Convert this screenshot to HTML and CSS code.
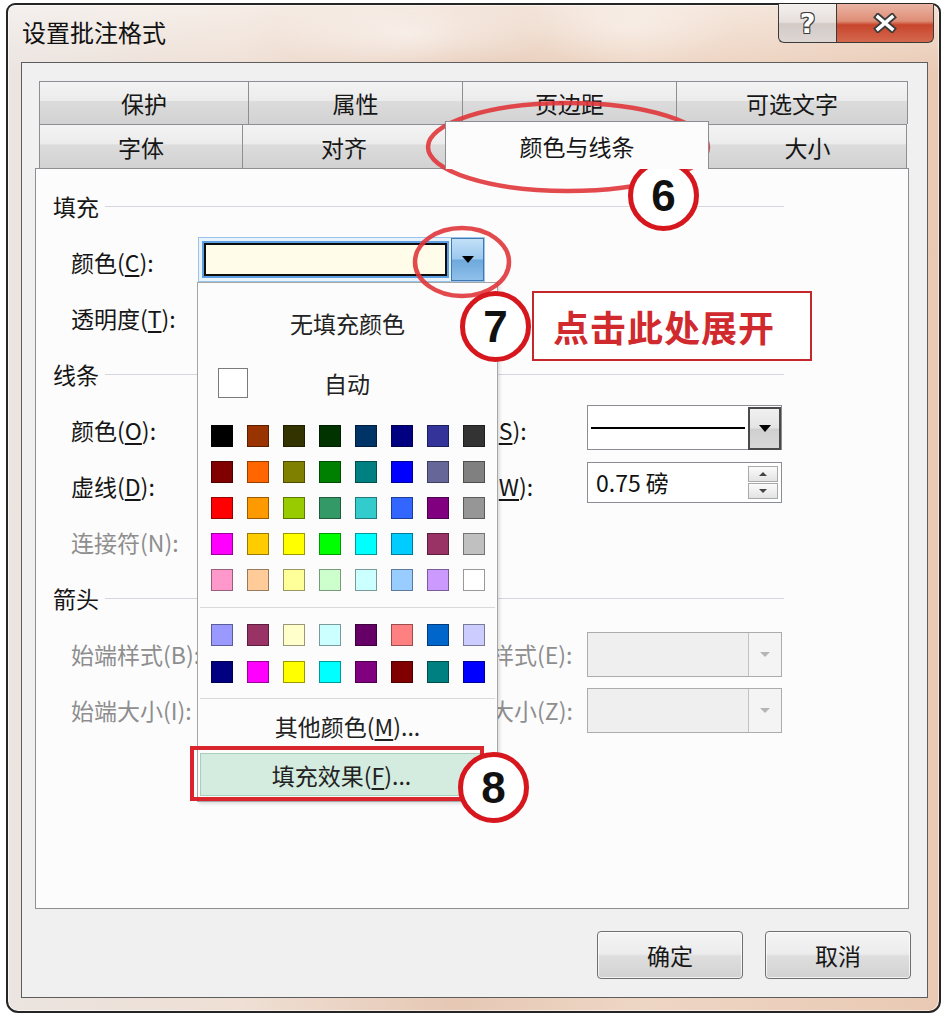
FILE: index.html
```html
<!DOCTYPE html>
<html lang="zh-CN">
<head>
  <meta charset="UTF-8" />
  <meta name="viewport" content="width=device-width, initial-scale=1.0" />
  <title>设置批注格式</title>
  <link rel="stylesheet" href="styles.css">
</head>
<body>
  <div class="window">
    <div class="titlebar">
      <span class="title">设置批注格式</span>
      <div class="caption-buttons">
        <div class="caption-btn help">?</div>
        <div class="caption-btn close">
          <svg width="24" height="20" viewBox="0 0 24 20">
            <path d="M5 4 L19 16 M19 4 L5 16" stroke="#3b3b3b" stroke-width="7" stroke-linecap="square" fill="none"/>
            <path d="M5 4 L19 16 M19 4 L5 16" stroke="#ffffff" stroke-width="3.5" stroke-linecap="square" fill="none"/>
          </svg>
        </div>
      </div>
    </div>

    <div class="client">
      <div class="tabs">
        <div class="tab-row">
          <div class="tab tab-protect">保护</div>
          <div class="tab tab-props">属性</div>
          <div class="tab tab-margins">页边距</div>
          <div class="tab tab-alt">可选文字</div>
        </div>
        <div class="tab-row">
          <div class="tab tab-font">字体</div>
          <div class="tab tab-align">对齐</div>
          <div class="tab tab-colors active">颜色与线条</div>
          <div class="tab tab-size">大小</div>
        </div>
      </div>

      <div class="panel">
        <div class="group-title">填充</div>
        <div class="field-row">
          <span class="label">颜色(<u>C</u>):</span>
          <div class="color-combo">
            <div class="color-field"></div>
            <div class="color-drop"><i class="arrow"></i></div>
          </div>
        </div>
        <div class="field-row">
          <span class="label">透明度(<u>T</u>):</span>
        </div>

        <div class="group-title">线条</div>
        <div class="field-row">
          <span class="label">颜色(<u>O</u>):</span>
          <span class="label col-3">样式(<u>S</u>):</span>
          <div class="combo col-4">
            <div class="combo-value"><span class="line-sample"></span></div>
            <div class="combo-drop dark"><i class="arrow"></i></div>
          </div>
        </div>
        <div class="field-row">
          <span class="label">虚线(<u>D</u>):</span>
          <span class="label col-3">粗细(<u>W</u>):</span>
          <div class="spin col-4">
            <span class="spin-value">0.75 磅</span>
            <div class="spin-buttons">
              <div class="spin-btn"><i class="arrow up"></i></div>
              <div class="spin-btn"><i class="arrow small"></i></div>
            </div>
          </div>
        </div>
        <div class="field-row">
          <span class="label disabled">连接符(N):</span>
        </div>

        <div class="group-title">箭头</div>
        <div class="field-row">
          <span class="label disabled">始端样式(B):</span>
          <span class="label disabled col-3">末端样式(E):</span>
          <div class="combo disabled col-4">
            <div class="combo-value"></div>
            <div class="combo-drop"><i class="arrow faint"></i></div>
          </div>
        </div>
        <div class="field-row">
          <span class="label disabled">始端大小(I):</span>
          <span class="label disabled col-3">末端大小(Z):</span>
          <div class="combo disabled col-4">
            <div class="combo-value"></div>
            <div class="combo-drop"><i class="arrow faint"></i></div>
          </div>
        </div>
      </div>

      <div class="dialog-buttons">
        <div class="button">确定</div>
        <div class="button">取消</div>
      </div>
    </div>
  </div>

  <!-- colour picker dropped from the fill colour combo -->
  <div class="color-menu">
    <div class="menu-item no-fill">无填充颜色</div>
    <div class="auto-row">
      <span class="auto-box"></span>
      <span class="auto-text">自动</span>
    </div>
    <div class="swatches" id="standardColors"></div>
    <div class="menu-sep"></div>
    <div class="swatches chart" id="chartColors"></div>
    <div class="menu-sep"></div>
    <div class="menu-item more">其他颜色(<u>M</u>)...</div>
    <div class="menu-item hot">填充效果(<u>F</u>)...</div>
  </div>

  <!-- step markers -->
  <svg class="marks" width="946" height="1016" viewBox="0 0 946 1016">
    <ellipse cx="568" cy="147" rx="140" ry="44" />
    <ellipse cx="462" cy="262" rx="47" ry="34" />
  </svg>
  <div class="hot-frame"></div>
  <div class="step step-6">6</div>
  <div class="step step-7">7</div>
  <div class="step step-8">8</div>
  <div class="callout">点击此处展开</div>

  <script>
    const standard = [
      ["#000000", "#993300", "#333300", "#003300", "#003366", "#000080", "#333399", "#333333"],
      ["#800000", "#ff6600", "#808000", "#008000", "#008080", "#0000ff", "#666699", "#808080"],
      ["#ff0000", "#ff9900", "#99cc00", "#339966", "#33cccc", "#3366ff", "#800080", "#969696"],
      ["#ff00ff", "#ffcc00", "#ffff00", "#00ff00", "#00ffff", "#00ccff", "#993366", "#c0c0c0"],
      ["#ff99cc", "#ffcc99", "#ffff99", "#ccffcc", "#ccffff", "#99ccff", "#cc99ff", "#ffffff"]
    ];
    const chart = [
      ["#9999ff", "#993366", "#ffffcc", "#ccffff", "#660066", "#ff8080", "#0066cc", "#ccccff"],
      ["#000080", "#ff00ff", "#ffff00", "#00ffff", "#800080", "#800000", "#008080", "#0000ff"]
    ];

    function fill(id, rows) {
      const grid = document.getElementById(id);
      rows.flat().forEach(color => {
        const cell = document.createElement("span");
        cell.className = "swatch";
        cell.style.background = color;
        grid.appendChild(cell);
      });
    }

    fill("standardColors", standard);
    fill("chartColors", chart);
  </script>
</body>
</html>
```

FILE: styles.css
```css
/* Basic Reset */
*, *:before, *:after {
  box-sizing: border-box;
  margin: 0;
  padding: 0;
}

body {
  width: 946px;
  height: 1016px;
  overflow: hidden;
  background: #ffffff;
  font-family: "Noto Sans CJK SC", "Liberation Sans", sans-serif;
  font-size: 23px;
  color: #161616;
}

u {
  text-decoration: underline;
  text-underline-offset: 3px;
}

/* Window frame (Aero style) */
.window {
  display: flex;
  flex-direction: column;
  width: 935px;
  height: 1010px;
  margin: 3px 0 0 6px;
  padding: 0 11px 13px 13px;
  border: 2px solid #252525;
  border-radius: 9px 9px 12px 12px;
  background:
    radial-gradient(ellipse 140px 45px at 400px 28px, rgba(255, 255, 255, 0.55), rgba(255, 255, 255, 0)),
    radial-gradient(ellipse 110px 40px at 620px 20px, rgba(255, 255, 255, 0.35), rgba(255, 255, 255, 0)),
    linear-gradient(180deg, rgba(255, 255, 255, 0.45), rgba(255, 255, 255, 0) 70px),
    linear-gradient(90deg, #ebe4e0 0%, #efdfd4 25%, #e6c8b4 48%, #eed6c5 68%, #e9c9b3 100%);
  box-shadow: inset 0 0 0 1px rgba(255, 255, 255, 0.55);
}

.titlebar {
  display: flex;
  justify-content: space-between;
  align-items: flex-start;
  height: 57px;
  flex-shrink: 0;
}

.title {
  margin: 12px 0 0 1px;
  line-height: 30px;
  font-size: 24px;
  color: #111;
}

.caption-buttons {
  display: flex;
  margin: -1px -6px 0 0;
}

.caption-btn {
  display: flex;
  align-items: center;
  justify-content: center;
  height: 39px;
  border: 1px solid #3a3a3a;
  border-top: none;
}

.caption-btn.help {
  width: 58px;
  border-right: none;
  border-radius: 0 0 0 6px;
  background: linear-gradient(180deg, #f4f0ee 0%, #e6dfdc 48%, #d3cac6 52%, #ddd6d3 100%);
  font-family: "DejaVu Sans", sans-serif;
  font-weight: bold;
  font-size: 27px;
  color: #fff;
  text-shadow: 1px 1px 0 #3c3c3c, -1px -1px 0 #3c3c3c, 1px -1px 0 #3c3c3c, -1px 1px 0 #3c3c3c;
}

.caption-btn.close {
  width: 98px;
  border-radius: 0 0 6px 0;
  background: linear-gradient(180deg, #ebb4a4 0%, #de8d76 45%, #c8452c 55%, #d3684d 100%);
}

/* Client area */
.client {
  flex: 1;
  display: flex;
  flex-direction: column;
  padding-top: 18px;
  border: 1px solid #5d5d5d;
  background: #f0f0f0;
}

.tabs {
  margin: 0 20px 0 17px;
}

.tab-row {
  display: flex;
  height: 43px;
}

.tab-row + .tab-row {
  height: 44px;
}

.tab {
  display: flex;
  align-items: center;
  justify-content: center;
  margin-right: -1px;
  border: 1px solid #8c8e94;
  border-bottom: none;
  background: linear-gradient(180deg, #f3f3f3 0%, #ececec 44%, #dcdcdc 46%, #d2d2d2 100%);
  font-size: 23px;
  color: #161616;
}

.tab-protect { width: 210px; }
.tab-props { width: 215px; }
.tab-margins { width: 215px; }
.tab-alt { width: 232px; }
.tab-font { width: 204px; }
.tab-align { width: 204px; }
.tab-colors { width: 264px; }
.tab-size { width: 199px; }

.tab.active {
  position: relative;
  z-index: 1;
  margin-top: -3px;
  margin-bottom: -1px;
  background: #fcfcfd;
}

.panel {
  height: 741px;
  margin: 0 18px 0 13px;
  padding: 9px 124px 0 17px;
  border: 1px solid #8e8f92;
  background: #fcfcfd;
}

.group-title {
  display: flex;
  align-items: center;
  gap: 6px;
  height: 56px;
  color: #161616;
}

.group-title:after {
  content: "";
  flex: 1;
  height: 1px;
  background: #d4d7dc;
}

.field-row {
  display: grid;
  grid-template-columns: 127px 247px 142px 195px;
  align-items: center;
  height: 56px;
  padding-left: 18px;
}

.label {
  white-space: nowrap;
  grid-column: 1;
}

.label.col-3 { grid-column: 3; }
.col-4 { grid-column: 4; }

.label.disabled {
  color: #8e8e8e;
}

/* Fill colour combo (focused) */
.color-combo {
  grid-column: 2 / 4;
  display: flex;
  width: 287px;
  height: 45px;
  margin-top: -5px;
  border: 1px solid #9cc4ea;
  background: #e8f2fb;
}

.color-field {
  flex: 1;
  margin: 5px 4px 5px 5px;
  border: 2px solid #0d0d0d;
  background: #fffde9;
  box-shadow: 0 0 0 2px #5c9fe3;
}

.color-drop {
  display: flex;
  align-items: center;
  justify-content: center;
  width: 33px;
  border: 1px solid #3f79b1;
  background: linear-gradient(180deg, #c3e0f7 0%, #9cc9ee 48%, #6fa9dc 52%, #8fc0ea 100%);
}

.arrow {
  display: block;
  width: 0;
  height: 0;
  border-left: 6px solid transparent;
  border-right: 6px solid transparent;
  border-top: 7px solid #000;
}

.arrow.up {
  border-top: none;
  border-bottom: 4px solid #444;
  border-left-width: 4px;
  border-right-width: 4px;
}

.arrow.small {
  border-top-width: 4px;
  border-left-width: 4px;
  border-right-width: 4px;
  border-top-color: #444;
}

.arrow.faint {
  border-top-width: 5px;
  border-left-width: 5px;
  border-right-width: 5px;
  border-top-color: #b5b5b5;
}

/* Generic combo and spin box */
.combo {
  display: flex;
  height: 45px;
  border: 1px solid #8a8d93;
  background: #ffffff;
}

.field-row .combo.col-4:not(.disabled) {
  margin-top: -5px;
}

.combo-value {
  flex: 1;
  display: flex;
  align-items: center;
  padding: 0 3px;
}

.line-sample {
  flex: 1;
  height: 2px;
  background: #000;
}

.combo-drop {
  display: flex;
  align-items: center;
  justify-content: center;
  width: 33px;
  border-left: 1px solid #c2c2c2;
  background: #f4f4f4;
}

.combo-drop.dark {
  margin: 1px 0 -1px;
  border: 2px solid #4a4a4a;
  background: linear-gradient(180deg, #f0f0f0 0%, #e4e4e4 48%, #cfcfcf 52%, #d8d8d8 100%);
}

.combo.disabled {
  border-color: #acacac;
  background: #efefef;
}

.spin {
  display: flex;
  align-items: center;
  justify-content: space-between;
  height: 41px;
  margin-top: -8px;
  padding: 0 3px 0 8px;
  border: 1px solid #8a8d93;
  background: #ffffff;
}

.spin-value {
  font-size: 23px;
  color: #111;
}

.spin-buttons {
  display: flex;
  flex-direction: column;
  gap: 1px;
}

.spin-btn {
  display: flex;
  align-items: center;
  justify-content: center;
  width: 30px;
  height: 16px;
  border: 1px solid #a9a9a9;
  background: linear-gradient(180deg, #fbfbfb, #e3e3e3);
}

/* OK / Cancel */
.dialog-buttons {
  display: flex;
  justify-content: flex-end;
  gap: 22px;
  margin: 22px 16px 0 0;
}

.button {
  display: flex;
  align-items: center;
  justify-content: center;
  width: 146px;
  height: 48px;
  border: 1px solid #6f6f6f;
  border-radius: 4px;
  background: linear-gradient(180deg, #f4f4f4 0%, #ececec 48%, #dedede 52%, #d2d2d2 100%);
  box-shadow: inset 0 0 0 1px rgba(255, 255, 255, 0.7);
}

/* Colour picker popup */
.color-menu {
  position: absolute;
  left: 197px;
  top: 282px;
  width: 301px;
  height: 520px;
  border: 1px solid #a6a6a6;
  background: #fcfcfc;
  box-shadow: 2px 2px 3px rgba(0, 0, 0, 0.12);
}

.menu-item {
  display: flex;
  align-items: center;
  justify-content: center;
  color: #222;
}

.menu-item.no-fill { height: 79px; }

.auto-row {
  display: flex;
  align-items: center;
  height: 42px;
  padding: 0 51px 0 20px;
}

.auto-box {
  width: 30px;
  height: 30px;
  border: 1px solid #7a7a7a;
  background: #fff;
}

.auto-text {
  flex: 1;
  text-align: center;
  color: #222;
}

.swatches {
  display: grid;
  grid-template-columns: repeat(8, 22px);
  column-gap: 14px;
  row-gap: 14px;
  margin-top: 21px;
  padding-left: 13px;
}

.swatches.chart {
  row-gap: 15px;
  margin-top: 16px;
}

.swatch {
  width: 22px;
  height: 22px;
  border: 1px solid rgba(0, 0, 0, 0.4);
}

.menu-sep {
  height: 1px;
  margin: 16px 2px 0;
  background: #d9d9d9;
}

.swatches.chart + .menu-sep {
  margin-top: 15px;
}

.menu-item.more { height: 54px; }

.menu-item.hot {
  height: 43px;
  margin: 0 14px 0 2px;
  border: 1px solid #a9cfbb;
  background: #d4ebdf;
}

/* Step markers */
.marks {
  position: absolute;
  left: 0;
  top: 0;
  pointer-events: none;
}

.marks ellipse {
  fill: none;
  stroke: #e0363b;
  stroke-width: 4.5;
  opacity: 0.9;
}

.hot-frame {
  position: absolute;
  left: 190px;
  top: 746px;
  width: 294px;
  height: 55px;
  border: 4px solid #d9262c;
}

.step {
  position: absolute;
  display: flex;
  align-items: center;
  justify-content: center;
  width: 71px;
  height: 71px;
  border: 5px solid #d7171e;
  border-radius: 50%;
  background: #ffffff;
  font-family: "Liberation Sans", Arial, sans-serif;
  font-weight: bold;
  font-size: 44px;
  color: #111;
}

.step-6 { left: 628px; top: 160px; }
.step-7 { left: 460px; top: 291px; }
.step-8 { left: 458px; top: 752px; }

.callout {
  position: absolute;
  left: 532px;
  top: 291px;
  display: flex;
  align-items: center;
  width: 280px;
  height: 70px;
  padding-left: 19px;
  border: 2px solid #c4282c;
  background: #ffffff;
  font-size: 36px;
  font-weight: bold;
  letter-spacing: 1px;
  color: #d02a2e;
}
```
